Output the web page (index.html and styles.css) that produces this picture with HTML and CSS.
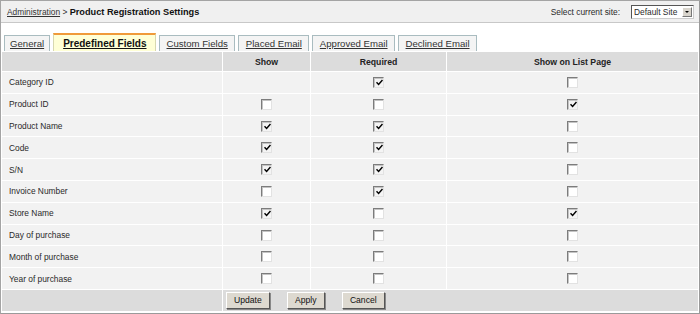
FILE: index.html
```html
<!DOCTYPE html>
<html lang="en">
<head>
  <meta charset="UTF-8">
  <title>Product Registration Settings</title>
  <link rel="stylesheet" href="styles.css">
</head>
<body>
  <div class="frame">
    <div class="topbar">
      <div class="crumbs"><a href="#">Administration</a> &gt; <b>Product Registration Settings</b></div>
      <div class="site">
        Select current site:
        <span class="select">Default Site<span class="arrow"></span></span>
      </div>
    </div>

    <div class="tabs">
      <a class="tab" href="#">General</a>
      <a class="tab active" href="#">Predefined Fields</a>
      <a class="tab" href="#">Custom Fields</a>
      <a class="tab" href="#">Placed Email</a>
      <a class="tab" href="#">Approved Email</a>
      <a class="tab" href="#">Declined Email</a>
    </div>

    <table class="fields">
      <colgroup>
        <col class="w-name">
        <col class="w-show">
        <col class="w-req">
        <col>
      </colgroup>
      <thead>
        <tr>
          <th></th>
          <th>Show</th>
          <th>Required</th>
          <th>Show on List Page</th>
        </tr>
      </thead>
      <tbody id="rows"></tbody>
      <tfoot>
        <tr>
          <td></td>
          <td colspan="3" class="actions">
            <button type="button">Update</button>
            <button type="button">Apply</button>
            <button type="button">Cancel</button>
          </td>
        </tr>
      </tfoot>
    </table>
  </div>

  <script>
    // null = no checkbox, 0 = off, 1 = on
    const fields = [
      ['Category ID', null, 1, 0],
      ['Product ID', 0, 0, 1],
      ['Product Name', 1, 1, 0],
      ['Code', 1, 1, 0],
      ['S/N', 1, 1, 0],
      ['Invoice Number', 0, 1, 0],
      ['Store Name', 1, 0, 1],
      ['Day of purchase', 0, 0, 0],
      ['Month of purchase', 0, 0, 0],
      ['Year of purchase', 0, 0, 0]
    ];

    const check = '<svg width="7" height="7" viewBox="0 0 7 7"><path d="M0.5 3.2 L2.6 5.4 L6.5 1" fill="none" stroke="#000" stroke-width="1.5"/></svg>';

    function box(v) {
      if (v === null) return '';
      return v ? `<span class="cb on">${check}</span>` : '<span class="cb"></span>';
    }

    let html = '';
    for (let [name, a, b, c] of fields) {
      html += `<tr><td class="name">${name}</td><td>${box(a)}</td><td>${box(b)}</td><td>${box(c)}</td></tr>`;
    }
    document.getElementById('rows').innerHTML = html;
  </script>
</body>
</html>
```

FILE: styles.css
```css
body {
  margin: 0;
  font-family: "Liberation Sans", Arial, sans-serif;
  font-size: 8.4px;
  color: #2a2a2a;
  background: #fff;
}
.frame {
  width: 698px;
  height: 312px;
  border: 1px solid #a4a4a4;
  border-right: 2px solid #9a9a9a;
  border-bottom: 2px solid #9a9a9a;
  background: #fff;
  overflow: hidden;
}
.topbar {
  display: flex;
  justify-content: space-between;
  align-items: center;
  height: 21px;
  padding: 0 5px 0 6px;
  background: #f0f0f0;
  border-bottom: 1px solid #c8c8c8;
}
.crumbs a {
  color: #333;
}
.crumbs b {
  font-size: 9.2px;
  color: #111;
}
.site {
  display: flex;
  align-items: center;
  gap: 11px;
}
.select {
  display: flex;
  align-items: center;
  justify-content: space-between;
  width: 59px;
  height: 12px;
  padding-left: 2px;
  white-space: nowrap;
  background: #fff;
  border: 1px solid;
  border-color: #555 #ccc #ccc #555;
}
.arrow {
  position: relative;
  width: 10px;
  height: 10px;
  margin-right: 1px;
  background: #d8d4cc;
  border: 1px solid;
  border-color: #fff #777 #777 #fff;
  box-sizing: border-box;
}
.arrow::after {
  content: "";
  position: absolute;
  left: 2px;
  top: 3px;
  border-left: 2px solid transparent;
  border-right: 2px solid transparent;
  border-top: 2px solid #000;
}
.tabs {
  display: flex;
  align-items: flex-end;
  gap: 3px;
  height: 17px;
  margin-top: 11px;
  padding-left: 3px;
  font-size: 9.6px;
}
.tab {
  height: 15px;
  line-height: 15px;
  padding: 0 6px 0 7px;
  color: #333;
  background: #f4f4f4;
  border: 1px solid #a9bcc0;
  border-bottom: none;
}
.tab:first-child {
  padding: 0 5px;
}
.tab.active {
  height: 16px;
  line-height: 17px;
  padding: 0 8px 0 9px;
  font-size: 10px;
  font-weight: bold;
  color: #111;
  background: #ffffd6;
  border-color: #d8d8b0;
  border-top: 2px solid #f09a3a;
}
.fields {
  width: 100%;
  table-layout: fixed;
  border-collapse: collapse;
  border-top: 1px solid #a0a0a0;
}
.w-name { width: 221px; }
.w-show { width: 88px; }
.w-req { width: 136px; }
.fields th,
.fields td {
  padding: 0;
  border: 1px solid #fff;
  text-align: center;
  background: #f2f2f2;
}
.fields th {
  height: 19px;
  font-size: 8.7px;
  font-weight: bold;
  color: #222;
  background: #dcdcdc;
}
.fields td {
  height: 20.8px;
}
.fields td.name {
  text-align: left;
  padding-left: 7px;
}
.cb {
  display: inline-block;
  width: 9px;
  height: 9px;
  vertical-align: middle;
  background: #fff;
  border: 1px solid;
  border-color: #7c7c7c #e2e2e2 #e2e2e2 #7c7c7c;
  box-shadow: inset 1px 1px 0 #c4c4c4;
  line-height: 0;
}
.cb.on {
  background: #f4f4f4;
}
.cb svg {
  margin: 1px 0 0 1px;
}
.fields tfoot td {
  height: 21px;
  background: #dcdcdc;
}
.fields td.actions {
  text-align: left;
  padding-left: 3px;
}
.actions button {
  height: 17px;
  padding: 0 7px;
  margin-right: 15px;
  font-family: "Liberation Sans", Arial, sans-serif;
  font-size: 8.6px;
  color: #111;
  background: #ddd9d0;
  border: 1px solid;
  border-color: #fff #555 #555 #fff;
  box-shadow: 1px 1px 0 #888;
}
```
